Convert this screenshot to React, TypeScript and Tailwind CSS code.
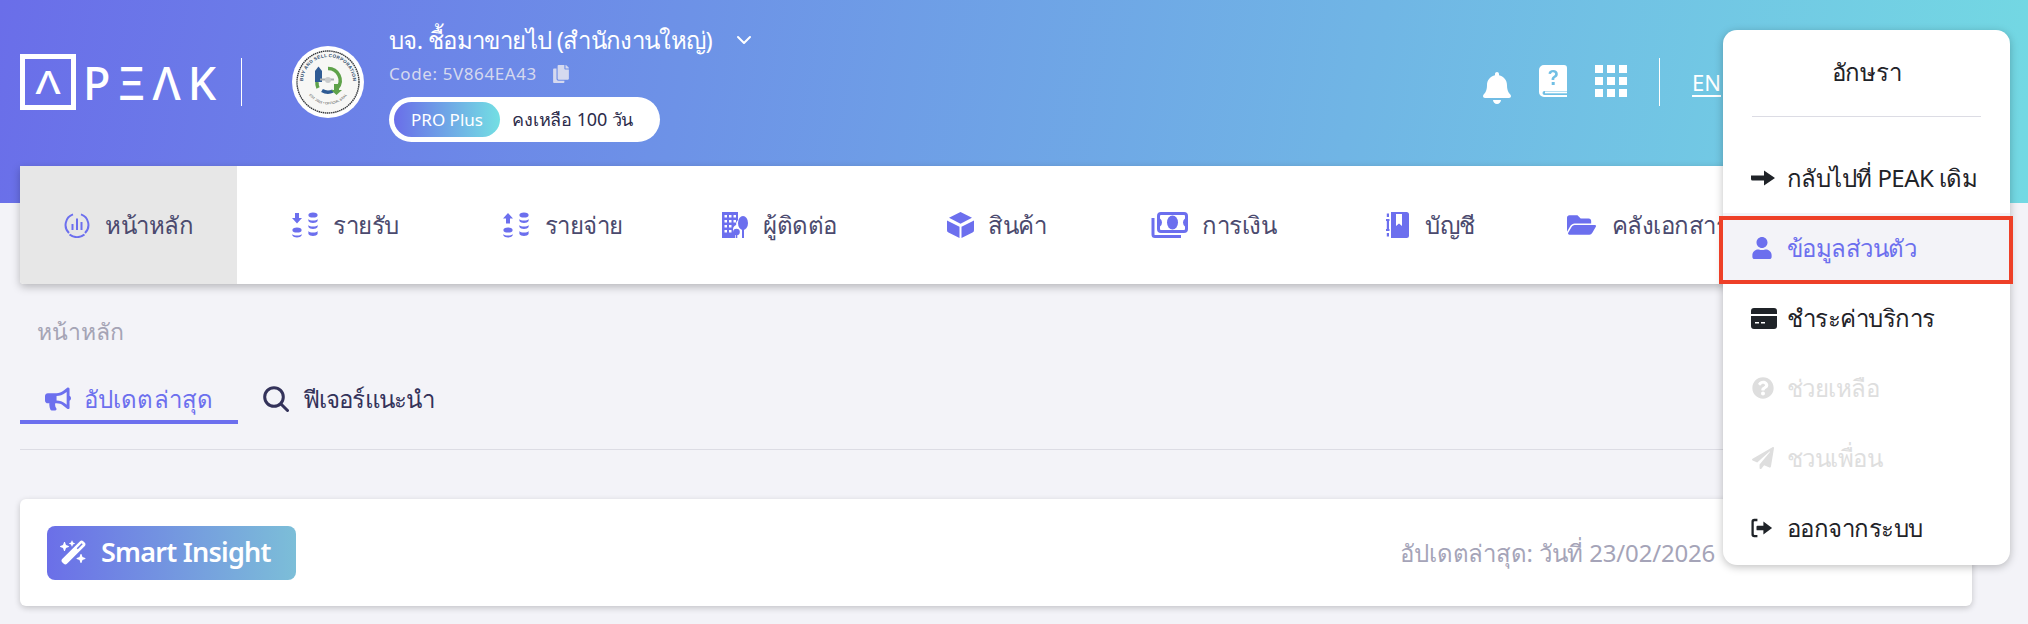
import React from "react";
import { ChevronDown } from "lucide-react";
import {
  FaBell,
  FaBullhorn,
  FaCopy,
  FaFolderOpen,
  FaPaperPlane,
  FaQuestionCircle,
  FaUser,
} from "react-icons/fa";
import { FaWandMagicSparkles } from "react-icons/fa6";

const DashIcon = () => (
  <svg viewBox="0 0 26 26" className="h-[26px] w-[26px]" fill="none" stroke="#6c6fee">
    <path d="M9 2.4A11.2 11.2 0 0 0 5 21" strokeWidth="2" />
    <path d="M17 2.4A11.2 11.2 0 0 1 21 21" strokeWidth="2" />
    <path d="M5.5 22.5a12 12 0 0 0 15 0" strokeWidth="2" />
    <path d="M8.5 12v6M13 6.5V18M17.5 10v8" strokeWidth="2" />
  </svg>
);

const CoinsIcon = ({ up }: { up?: boolean }) => (
  <svg viewBox="0 0 26 26" className="h-[26px] w-[26px]" fill="#6c6fee">
    {up ? <path d="M5 1l5 5.5H7v5H3v-5H0z" /> : <path d="M3 1h4v5h3l-5 5.5L0 6h3z" />}
    <ellipse cx="5" cy="18" rx="4.6" ry="2.6" />
    <path d="M.4 22c1 2 8.200 2 9.200 0v1.500c-1 2.500-8.200 2.500-9.200 0z" />
    <ellipse cx="21" cy="3" rx="4.600" ry="2.600" />
    <path d="M16.400 7c1 2 8.200 2 9.200 0v2c-1 2.500-8.200 2.500-9.200 0zM16.400 13c1 2 8.200 2 9.200 0v2c-1 2.500-8.200 2.500-9.200 0zM16.400 19c1 2 8.200 2 9.200 0v3c-1 2.500-8.200 2.500-9.200 0z" />
  </svg>
);

const ContactIcon = () => (
  <svg viewBox="0 0 26 26" className="h-[26px] w-[26px]" fill="#6c6fee">
    <path
      fillRule="evenodd"
      d="M0 0h16v8c-1.500 1.500-2 3-1.800 5-1.500.5-3.200 2-3.200 4.500 0 2 1 3 2 3.800V26H0zM2.500 3v2.500H5V3zM7 3v2.500h2.500V3zM11.500 3v2.500H14V3zM2.500 8v2.500H5V8zM7 8v2.500h2.500V8zM11.500 8v2.500H14V8zM2.500 13v2.500H5V13zM7 13v2.500h2.500V13zM2.500 18v2.500H5V18zM7 18v2.500h2.500V18z"
    />
    <ellipse cx="21" cy="11" rx="5" ry="7" />
    <rect x="20" y="16" width="2" height="10" />
    <circle cx="14.500" cy="20" r="3.300" />
    <rect x="13.700" y="22" width="1.600" height="4" />
  </svg>
);

const BoxIcon = () => (
  <svg viewBox="0 0 27 26" className="h-[26px] w-[27px]" fill="#6c6fee">
    <path d="M13.500 0L25 5.800 13.500 11.800 2 5.800z" />
    <path d="M0 8.500l12.500 6.200V26L1.500 20.500A2.500 2.500 0 0 1 0 18.200z" />
    <path d="M27 8.500l-12.500 6.200V26l11-5.500a2.500 2.500 0 0 0 1.500-2.300z" />
  </svg>
);

const MoneyIcon = () => (
  <svg viewBox="0 0 37 26" className="h-[26px] w-[37px]" fill="none">
    <path d="M2 6v16.500A2 2 0 0 0 4 24.500H30" stroke="#6c6fee" strokeWidth="3" />
    <rect x="7.500" y="1.500" width="28" height="18" rx="2.500" fill="#fff" stroke="#6c6fee" strokeWidth="3" />
    <ellipse cx="21.500" cy="10.500" rx="5.500" ry="7" fill="#6c6fee" />
    <path d="M9 6.500a5 5 0 0 1 0 8zM34 6.500a5 5 0 0 0 0 8z" fill="#6c6fee" />
  </svg>
);

const LedgerIcon = () => (
  <svg viewBox="0 0 23 26" className="h-[26px] w-[23px]" fill="#6c6fee">
    <path
      fillRule="evenodd"
      d="M5 0h15.500A2.500 2.500 0 0 1 23 2.500v21a2.500 2.500 0 0 1-2.500 2.500H5zM10 2v12l3-2.500 3 2.500V2z"
    />
    <path d="M0 7h3.500v2H3v8h.5v2H0v-2h.8V9H0zM.8 1.500h2.200V5H.8zM.8 21h2.200v3.500H.8z" />
  </svg>
);

const HelpBookIcon = () => (
  <svg viewBox="0 0 28 32" className="h-8 w-7" fill="#fff">
    <path
      fillRule="evenodd"
      d="M5 0h20a3 3 0 0 1 3 3v23H5.500a2 2 0 0 0 0 4H28v2H5a5 5 0 0 1-5-5V5a5 5 0 0 1 5-5zM14.200 5c-2.700 0-4.400 1.300-4.700 3.700l2.500.4c.2-1.200 1-1.800 2.100-1.800s2 .7 2 1.700c0 .9-.500 1.400-1.500 2-1.400.9-2 1.800-2 3.200v.8h2.700v-.6c0-.8.300-1.200 1.300-1.800 1.400-.9 2.200-2 2.200-3.700 0-2.300-1.900-3.900-4.600-3.900zM12.700 17v3h3v-3z"
    />
    <path d="M6 26.500h22v1.800H6z" />
  </svg>
);

const AppsIcon = () => (
  <svg viewBox="0 0 32 32" className="h-8 w-8" fill="#fff">
    {[0, 12, 24].map((y) =>
      [0, 12, 24].map((x) => <rect key={`${x}-${y}`} x={x} y={y} width="8" height="8" />)
    )}
  </svg>
);

const BackArrowIcon = () => (
  <svg viewBox="0 0 24 18" className="h-[18px] w-[24px]" fill="currentColor">
    <path d="M0 6.500h13V1.500L24 9l-11 7.500v-5H1.500A1.500 1.500 0 0 1 0 10z" />
  </svg>
);

const CardIcon = () => (
  <svg viewBox="0 0 26 21" className="h-[21px] w-[26px]" fill="currentColor">
    <path
      fillRule="evenodd"
      d="M3 0h20a3 3 0 0 1 3 3v3H0V3a3 3 0 0 1 3-3zM0 8h26v10a3 3 0 0 1-3 3H3a3 3 0 0 1-3-3zM4 14v1.500h4V14zM10 14v1.500h4V14z"
    />
  </svg>
);

const LogoutIcon = () => (
  <svg viewBox="0 0 24 22" className="h-[22px] w-[22px]" fill="currentColor">
    <path d="M7 1v2.500H4a1 1 0 0 0-1 1v13a1 1 0 0 0 1 1h3V21H3.500A3 3 0 0 1 .5 18V4a3 3 0 0 1 3-3z" />
    <path d="M7 8.500h6.500V4l9.500 7-9.500 7v-4.500H7a1 1 0 0 1-1-1v-3a1 1 0 0 1 1-1z" />
  </svg>
);

const MagnifierIcon = () => (
  <svg viewBox="0 0 26 26" className="h-[26px] w-[26px]" fill="none" stroke="currentColor" strokeWidth="3" strokeLinecap="round">
    <circle cx="11" cy="11" r="9.300" />
    <path d="M18 18l6.500 6.500" />
  </svg>
);

const CompanySeal = () => (
  <svg viewBox="0 0 72 72" className="h-[72px] w-[72px] shrink-0">
    <circle cx="36" cy="36" r="36" fill="#fff" />
    <circle cx="36" cy="36" r="31" fill="#f7f7f5" stroke="#33363a" strokeWidth="1.400" strokeDasharray="1.500 .6" />
    <defs>
      <path id="sealTop" d="M11 36a25 25 0 0 1 50 0" />
      <path id="sealBottom" d="M14 44a24 24 0 0 0 44 0" />
    </defs>
    <text fontSize="4.600" fontWeight="700" fill="#2d4a6b" fontFamily="'Liberation Sans', sans-serif" letterSpacing=".3">
      <textPath href="#sealTop" startOffset="50%" textAnchor="middle">
        BUY AND SELL CORPORATION
      </textPath>
    </text>
    <text fontSize="3.400" fill="#444" fontFamily="'Liberation Sans', sans-serif">
      <textPath href="#sealBottom" startOffset="50%" textAnchor="middle">
        EST. 2023 • OFFICIAL SEAL
      </textPath>
    </text>
    <path d="M36 22.500a12 12 0 0 1 9.500 19.500" fill="none" stroke="#5ea24a" strokeWidth="3.500" />
    <path d="M30 44.500a12 12 0 0 0 11 .5" fill="none" stroke="#2f5b94" strokeWidth="3.500" />
    <path d="M26 42a12 12 0 0 1-1-6" fill="none" stroke="#5ea24a" strokeWidth="3.500" />
    <path d="M42 38h5v6h3l-5.500 5-5.500-5h3z" fill="#5ea24a" />
    <rect x="23" y="25" width="7" height="11" fill="#2f5b94" />
    <path d="M23 25l3.500-4.500 3.500 4.500z" fill="#2f5b94" />
    <path d="M28 33.500h14" stroke="#a8acaf" strokeWidth="2" />
    <circle cx="36" cy="34" r="3" fill="#c8cbcd" />
  </svg>
);

const navItems: { label: string; icon: React.ReactNode; gap: string }[] = [
  { label: "หน้าหลัก", icon: <DashIcon />, gap: "gap-[15px]" },
  { label: "รายรับ", icon: <CoinsIcon />, gap: "gap-[15px]" },
  { label: "รายจ่าย", icon: <CoinsIcon up />, gap: "gap-[16px]" },
  { label: "ผู้ติดต่อ", icon: <ContactIcon />, gap: "gap-[15px]" },
  { label: "สินค้า", icon: <BoxIcon />, gap: "gap-[14px]" },
  { label: "การเงิน", icon: <MoneyIcon />, gap: "gap-[14px]" },
  { label: "บัญชี", icon: <LedgerIcon />, gap: "gap-[16px]" },
  { label: "คลังเอกสาร", icon: <FaFolderOpen className="h-[26px] w-[29px] text-[#6c6fee]" />, gap: "gap-[16px]" },
];

const menuItems = [
  { label: "กลับไปที่ PEAK เดิม", icon: <BackArrowIcon />, cls: "text-[#1f2328]" },
  { label: "ข้อมูลส่วนตัว", icon: <FaUser className="ml-[1px] h-[22px] w-[20px]" />, cls: "bg-[#f3f3f8] text-[#6c6fee]" },
  { label: "ชำระค่าบริการ", icon: <CardIcon />, cls: "text-[#1f2328]" },
  { label: "ช่วยเหลือ", icon: <FaQuestionCircle className="ml-[1px] h-[22px] w-[22px]" />, cls: "text-[#dedede]" },
  { label: "ชวนเพื่อน", icon: <FaPaperPlane className="ml-[1px] h-[22px] w-[22px]" />, cls: "text-[#dedede]" },
  { label: "ออกจากระบบ", icon: <LogoutIcon />, cls: "text-[#1f2328]" },
];

const App: React.FC = () => {
  return (
    <div className="relative h-[624px] w-[2028px] overflow-hidden bg-[#f3f3f8] font-['Noto_Sans',sans-serif]">
      {/* top gradient */}
      <div className="h-[203px] bg-[linear-gradient(100deg,#6a6ee9,#73d9e3)]">
        <div className="flex h-[164px] items-center pl-5 text-white">
          <div className="flex h-14 w-14 shrink-0 items-center justify-center border-[5px] border-white">
            <span className="scale-x-125 text-[32px] leading-none font-medium">Λ</span>
          </div>
          <span className="ml-[7px] w-[134px] shrink-0 text-[45px] leading-none font-medium tracking-[7px]">PΞΛK</span>
          <div className="ml-6 h-12 w-px bg-white" />
          <div className="ml-[50px]">
            <CompanySeal />
          </div>
          <div className="ml-[25px] flex flex-col">
            <div className="flex h-9 items-center">
              <span className="text-[24px] tracking-[-0.65px]">บจ. ชื้อมาขายไป (สำนักงานใหญ่)</span>
              <ChevronDown className="ml-5 h-6 w-6" strokeWidth={2} />
            </div>
            <div className="mt-1 flex h-6 items-center text-[17px] tracking-[0.6px] text-[#d5d9ef]">
              <span>Code: 5V864EA43</span>
              <FaCopy className="ml-[16px] h-[18px] w-[16px]" />
            </div>
            <div className="mt-[11px] flex h-[45px] w-[271px] items-center rounded-full bg-white pl-[5px]">
              <div className="flex h-[35px] w-[106px] items-center justify-center rounded-full bg-[linear-gradient(90deg,#6a6ee9,#73dfe3)] text-[17px]">
                PRO Plus
              </div>
              <span className="ml-3 text-[18px] tracking-[-0.15px] text-[#2c2b4a]">คงเหลือ 100 วัน</span>
            </div>
          </div>
          <div className="flex flex-1 items-center justify-end pr-[307px]">
            <FaBell className="mt-[12px] h-8 w-7" />
            <div className="ml-7 -mt-[3px]">
              <HelpBookIcon />
            </div>
            <div className="ml-7 -mt-[3px]">
              <AppsIcon />
            </div>
            <div className="ml-8 h-12 w-px bg-white" />
            <span className="ml-8 text-[22px] underline underline-offset-4">EN</span>
          </div>
        </div>
      </div>

      {/* main nav */}
      <nav className="relative -mt-[37px] mx-5 flex h-[118px] w-[1952px] overflow-hidden rounded-b-[4px] bg-white shadow-[0_3px_8px_rgba(0,0,0,0.25)]">
        {navItems.map((item, i) => (
          <div
            key={item.label}
            className={`flex w-[217px] shrink-0 items-center justify-center ${item.gap} ${i === 0 ? "bg-[#e7e7e7]" : ""}`}
          >
            {item.icon}
            <span className="text-[24px] tracking-[-0.5px] text-[#4b4a6e]">{item.label}</span>
          </div>
        ))}
      </nav>

      <div className="w-[1972px] pl-5">
        <div className="mt-[32px] pl-[17px] text-[23px] leading-[30px] text-[#a5a4b5]">หน้าหลัก</div>
        <div className="mt-[22px] flex">
          <div className="flex h-[56px] w-[218px] items-center justify-center gap-[13px] border-b-4 border-[#6c6fee] pt-[9px] text-[24px] font-medium tracking-[0.1px] text-[#6c6fee]">
            <FaBullhorn className="h-[26px] w-[26px]" />
            <span>อัปเดตล่าสุด</span>
          </div>
          <div className="ml-[25px] flex h-[56px] items-center gap-[14px] pt-[5px] text-[24px] font-medium tracking-[-0.9px] text-[#33325a]">
            <MagnifierIcon />
            <span>ฟีเจอร์แนะนำ</span>
          </div>
        </div>
        <div className="mt-[25px] h-px bg-[#dcdce4]" />
        <div className="mt-[49px] flex h-[107px] items-center justify-between rounded-[6px] bg-white pl-[27px] pr-[257px] shadow-[0_2px_6px_rgba(0,0,0,0.2)]">
          <div className="flex h-[54px] w-[249px] items-center gap-[14px] rounded-[8px] bg-[linear-gradient(90deg,#6b6fe8,#7cbed8)] pl-[13px] text-white">
            <FaWandMagicSparkles className="h-[27px] w-[27px]" />
            <span className="text-[27px] font-semibold tracking-[-0.75px]">Smart Insight</span>
          </div>
          <span className="text-[24px] tracking-[-0.2px] text-[#a5a4b8]">อัปเดตล่าสุด: วันที่ 23/02/2026</span>
        </div>
      </div>

      {/* user menu */}
      <div className="absolute left-[1723px] top-[30px] flex h-[535px] w-[287px] flex-col rounded-[14px] bg-white shadow-[0_2px_8px_rgba(0,0,0,0.25)]">
        <div className="flex h-[86px] shrink-0 items-center justify-center pb-[3px] text-[24px] tracking-[-0.3px] text-[#1f2328]">อักษรา</div>
        <div className="mx-[29px] h-px shrink-0 bg-[#dcdce4]" />
        <div className="mt-[26px] flex flex-col">
          {menuItems.map((item) => (
            <div key={item.label} className={`flex h-[70px] items-center pl-[28px] ${item.cls}`}>
              <span className="flex w-[36px] shrink-0 items-center">{item.icon}</span>
              <span className="text-[24px] tracking-[-0.55px]">{item.label}</span>
            </div>
          ))}
        </div>
      </div>
      {/* red highlight on the menu row */}
      <div className="absolute left-[1719px] top-[216px] h-[68px] w-[294px] border-4 border-[#ee4028]" />
    </div>
  );
};

export default App;
